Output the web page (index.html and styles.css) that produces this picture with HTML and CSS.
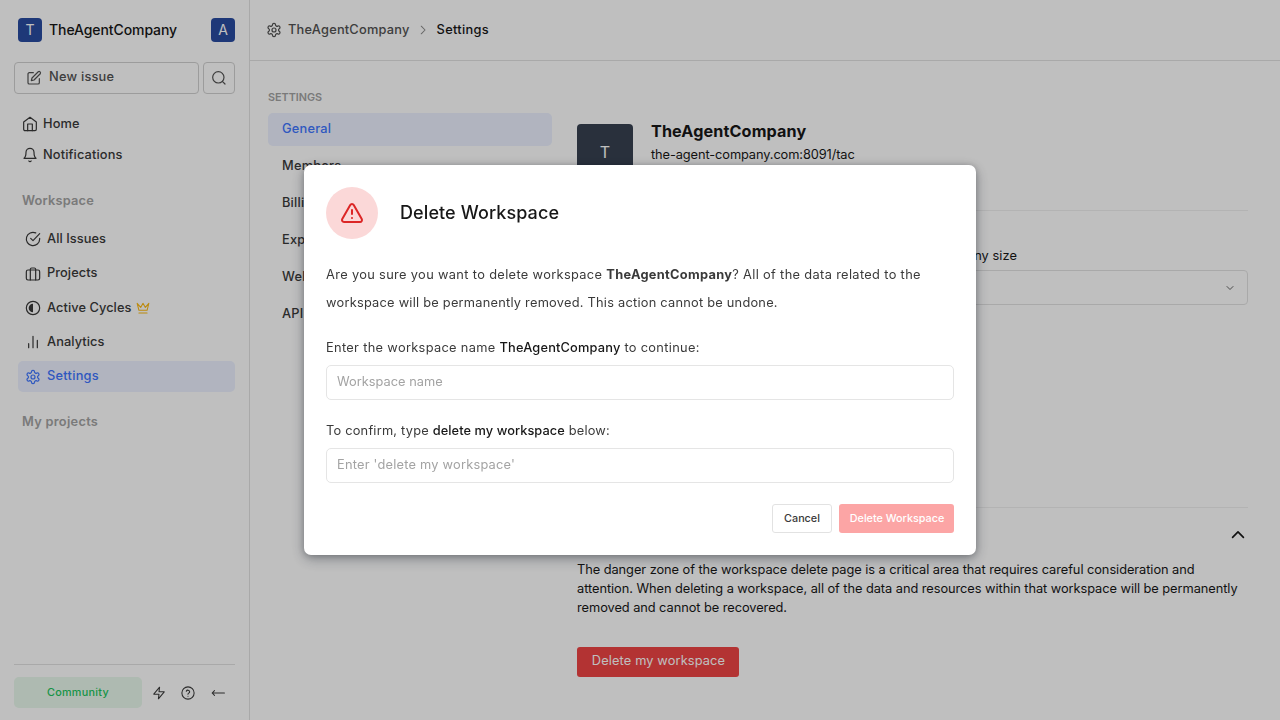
FILE: index.html
```html
<!DOCTYPE html>
<html lang="en">
<head>
<meta charset="utf-8">
<title>TheAgentCompany - General Settings</title>
<link rel="stylesheet" href="styles.css">
</head>
<body>
<div class="app">
  <aside class="sidebar">
    <div class="brand">
      <span class="avatar">T</span>
      <span class="brand-name">TheAgentCompany</span>
      <span class="avatar">A</span>
    </div>
    <div class="quick">
      <div class="new-issue">
        <svg class="icon i16" viewBox="0 0 24 24"><path d="M11 4H5a2 2 0 0 0-2 2v13a2 2 0 0 0 2 2h13a2 2 0 0 0 2-2v-6"/><path d="M18.4 2.6a2.17 2.17 0 0 1 3 3L12 15l-4 1 1-4Z"/></svg>
        <span>New issue</span>
      </div>
      <div class="search"><svg class="icon i16" viewBox="0 0 24 24"><circle cx="11" cy="11" r="8.5"/><path d="m21 21-4-4"/></svg></div>
    </div>
    <nav class="user-menu">
      <a class="user-item"><svg class="icon i16" viewBox="0 0 24 24"><path d="m2.500 9 9.500-7 9.500 7v11a2 2 0 0 1-2 2h-15a2 2 0 0 1-2-2z"/><path d="M8.500 22V12h7v10"/></svg><span>Home</span></a>
      <a class="user-item"><svg class="icon i16" viewBox="0 0 24 24"><path d="M6 8a6 6 0 0 1 12 0c0 7 3 9 3 9H3s3-2 3-9"/><path d="M10.300 21a1.940 1.940 0 0 0 3.400 0"/></svg><span>Notifications</span></a>
    </nav>
    <h2 class="group">Workspace</h2>
    <nav class="menu">
      <a class="item"><svg class="icon i16" viewBox="0 0 24 24"><path d="M22 11.080V12a10 10 0 1 1-5.930-9.140"/><path d="m8.500 11 3.500 3.500L22 4"/></svg><span>All Issues</span></a>
      <a class="item"><svg class="icon i16" viewBox="0 0 24 24"><rect x="2" y="6" width="20" height="15" rx="2.500"/><path d="M16 21V5a2 2 0 0 0-2-2h-4a2 2 0 0 0-2 2v16"/></svg><span>Projects</span></a>
      <a class="item"><svg class="icon i16" viewBox="0 0 24 24"><circle cx="12" cy="12" r="10"/><path class="solid" d="M12 5.500a6.500 6.500 0 0 0 0 13z"/></svg><span>Active Cycles</span><svg class="icon crown" viewBox="0 0 24 24"><path d="m2 4 3 12h14l3-12-6 7-4-7-4 7-6-7zM5 20.500h14"/></svg></a>
      <a class="item"><svg class="icon i16" viewBox="0 0 24 24"><path d="M18.500 20.500v-11M12 20.500v-17M5.500 20.500v-6"/></svg><span>Analytics</span></a>
      <a class="item active"><svg class="icon i16" viewBox="0 0 24 24"><use href="#gear"/></svg><span>Settings</span></a>
    </nav>
    <h2 class="group projects">My projects</h2>
    <div class="footer">
      <span class="plan">Community</span>
      <svg class="icon i14" viewBox="0 0 24 24"><path d="M13 2 3 14h9l-1 8 10-12h-9z"/></svg>
      <svg class="icon i14" viewBox="0 0 24 24"><circle cx="12" cy="12" r="10.500"/><path d="M9.100 9a3 3 0 0 1 5.800 1c0 2-3 2.500-3 4M12 17.500v.2"/></svg>
      <svg class="icon i14" viewBox="0 0 24 24"><path d="m6 8-4 4 4 4M2 12h21"/></svg>
    </div>
  </aside>

  <main class="main">
    <header class="topbar">
      <svg class="icon i16" viewBox="0 0 24 24">
        <g id="gear"><path d="M12.220 2h-.440a2 2 0 0 0-2 2v.180a2 2 0 0 1-1 1.730l-.430.250a2 2 0 0 1-2 0l-.150-.080a2 2 0 0 0-2.730.730l-.220.380a2 2 0 0 0 .730 2.730l.150.100a2 2 0 0 1 1 1.720v.510a2 2 0 0 1-1 1.740l-.150.090a2 2 0 0 0-.730 2.730l.220.380a2 2 0 0 0 2.730.730l.150-.080a2 2 0 0 1 2 0l.430.250a2 2 0 0 1 1 1.730V20a2 2 0 0 0 2 2h.440a2 2 0 0 0 2-2v-.180a2 2 0 0 1 1-1.730l.430-.250a2 2 0 0 1 2 0l.150.080a2 2 0 0 0 2.730-.730l.220-.390a2 2 0 0 0-.730-2.730l-.150-.080a2 2 0 0 1-1-1.740v-.500a2 2 0 0 1 1-1.740l.150-.090a2 2 0 0 0 .730-2.730l-.220-.380a2 2 0 0 0-2.730-.730l-.150.080a2 2 0 0 1-2 0l-.430-.250a2 2 0 0 1-1-1.730V4a2 2 0 0 0-2-2z"/><circle cx="12" cy="12" r="3"/></g>
      </svg>
      <span class="crumb">TheAgentCompany</span>
      <svg class="icon i14 sep" viewBox="0 0 24 24"><path d="m9 18.500 6.500-6.500-6.500-6.500"/></svg>
      <span class="crumb current">Settings</span>
    </header>
    <div class="body">
      <nav class="settings-nav">
        <h3 class="nav-title">SETTINGS</h3>
        <a class="nav-item selected">General</a>
        <a class="nav-item">Members</a>
        <a class="nav-item">Billing and plans</a>
        <a class="nav-item">Exports</a>
        <a class="nav-item">Webhooks</a>
        <a class="nav-item">API tokens</a>
      </nav>
      <section class="content">
        <div class="profile">
          <span class="logo">T</span>
          <div class="profile-text">
            <h1 class="profile-name">TheAgentCompany</h1>
            <p class="profile-url">the-agent-company.com:8091/tac</p>
          </div>
        </div>
        <div class="fields">
          <div class="field"><span class="field-label">Workspace name</span><div class="select"></div></div>
          <div class="field"><span class="field-label">Company size</span><div class="select"><svg class="icon i12" viewBox="0 0 24 24"><path d="m6 9 6 6 6-6"/></svg></div></div>
        </div>
        <div class="danger">
          <div class="danger-head"><span>Danger zone</span><svg class="icon i20" viewBox="0 0 24 24"><path d="m5.500 16 6.500-6.500 6.500 6.500"/></svg></div>
          <p class="danger-text">The danger zone of the workspace delete page is a critical area that requires careful consideration and<br>attention. When deleting a workspace, all of the data and resources within that workspace will be permanently<br>removed and cannot be recovered.</p>
          <button class="danger-btn">Delete my workspace</button>
        </div>
      </section>
    </div>
  </main>
</div>

<div class="backdrop">
  <div class="modal" role="dialog">
    <div class="modal-head">
      <span class="warn"><svg class="icon i24" viewBox="0 0 24 24"><path d="m21.730 18-8-14a2 2 0 0 0-3.480 0l-8 14A2 2 0 0 0 4 21h16a2 2 0 0 0 1.730-3Z"/><path d="M12 9v4M12 16.900v.2"/></svg></span>
      <h2 class="modal-title">Delete Workspace</h2>
    </div>
    <p class="modal-text"><span class="lead">Are you sure you want to delete workspace <b class="name">TheAgentCompany</b>? All of the data related to the</span><br>workspace will be permanently removed. This action cannot be undone.</p>
    <div class="ask">
      <label class="ask-label">Enter the workspace name <span class="strong">TheAgentCompany</span> to continue:</label>
      <input class="input" placeholder="Workspace name">
    </div>
    <div class="ask">
      <label class="ask-label confirm-label">To confirm, type <span class="strong phrase">delete my workspace</span> below:</label>
      <input class="input phrase-input" placeholder="Enter 'delete my workspace'">
    </div>
    <div class="actions">
      <button class="btn cancel">Cancel</button>
      <button class="btn confirm">Delete Workspace</button>
    </div>
  </div>
</div>
</body>
</html>
```
FILE: styles.css
```css
* { box-sizing: border-box; }
body { margin: 0; height: 720px; overflow: hidden; background: #fff; color: #171717; font: 400 12.8px/18px Inter, sans-serif; letter-spacing: 0.18px; }
h1, h2, h3, p { margin: 0; font-weight: inherit; font-size: inherit; }
button, input { font-family: inherit; margin: 0; }

.icon { display: block; flex: none; fill: none; stroke: currentColor; stroke-width: 1.8; stroke-linecap: round; stroke-linejoin: round; }
.icon .solid { fill: currentColor; stroke: none; }
.i12 { width: 12px; height: 12px; }
.i14 { width: 14px; height: 14px; }
.i16 { width: 16px; height: 16px; }
.i20 { width: 20px; height: 20px; stroke-width: 2; }
.i24 { width: 24px; height: 24px; stroke-width: 2; }

.app { display: flex; height: 720px; }

.sidebar { width: 250px; flex: none; padding: 18px 14px 0; border-right: 1px solid #e2e2e2; display: flex; flex-direction: column; color: #3a3a3a; font-weight: 450; }
.brand { display: flex; align-items: center; height: 24px; padding-left: 4px; }
.avatar { width: 24px; height: 24px; border-radius: 4px; background: #294ba1; color: #fff; font-size: 14px; font-weight: 400; line-height: 24px; text-align: center; letter-spacing: 0; }
.brand-name { flex: 1; margin-left: 7px; font-size: 14px; letter-spacing: -0.09px; color: #171717; }
.quick { display: flex; gap: 4px; margin-top: 20px; }
.new-issue { width: 185px; height: 32px; display: flex; align-items: center; gap: 7px; padding: 0 11px; border: 1px solid #d0d0d0; border-radius: 4px; color: #525252; }
.new-issue span { padding-bottom: 2px; letter-spacing: 0.23px; }
.search { width: 32px; height: 32px; display: grid; place-items: center; border: 1px solid #d0d0d0; border-radius: 4px; color: #525252; }
.user-menu { margin-top: 14px; }
.user-item { display: flex; align-items: center; gap: 5px; height: 31px; padding-left: 8px; letter-spacing: 0.14px; }
.group { margin-top: 22px; padding-left: 8px; font-weight: 600; color: #a3a3a3; line-height: 18px; }
.menu { display: flex; flex-direction: column; gap: 3.4px; margin: 14px 0 0 4px; }
.item { display: flex; align-items: center; height: 30.9px; padding-left: 7px; border-radius: 5px; letter-spacing: 0.07px; }
.item span { margin-left: 6px; padding-bottom: 1px; }
.item .crown { width: 14px; height: 14px; margin-left: 5px; color: #fbb914; }
.item.active { background: #ecf1ff; color: #3f76ff; letter-spacing: 0.26px; }
.group.projects { margin-top: 21px; letter-spacing: 0.28px; }
.footer { margin-top: auto; height: 56px; border-top: 1px solid #e2e2e2; display: flex; align-items: center; }
.plan { width: 128px; height: 31px; border-radius: 5px; background: #e8f9ec; color: #22c55e; font-size: 10.8px; line-height: 31px; text-align: center; letter-spacing: 0.3px; }
.footer .icon { margin-left: 15.5px; }
.footer .plan + .icon { margin-left: 10px; }
.footer .plan + .icon + .icon { margin-left: 15px; }

.main { flex: 1; min-width: 0; display: flex; flex-direction: column; }
.topbar { height: 61px; border-bottom: 1px solid #e2e2e2; display: flex; align-items: center; padding-left: 16px; font-weight: 450; color: #525252; letter-spacing: 0.22px; }
.crumb { margin-left: 6px; }
.sep { margin-left: 6px; color: #8b8b8b; }
.crumb.current { margin-left: 7px; color: #171717; letter-spacing: 0.3px; }
.body { display: flex; gap: 25px; padding: 27px 32px 0 18px; }

.settings-nav { width: 284px; flex: none; display: flex; flex-direction: column; gap: 4px; font-weight: 450; }
.nav-title { height: 21px; padding-top: 1px; font-size: 10.8px; font-weight: 600; letter-spacing: 0; color: #a3a3a3; }
.nav-item { height: 33px; padding: 0 14px; border-radius: 5px; line-height: 32px; color: #3a3a3a; letter-spacing: 0.22px; }
.nav-item.selected { background: #ecf1ff; color: #3f76ff; }

.content { flex: 1; min-width: 0; padding-top: 33px; }
.profile { display: flex; gap: 18px; align-items: flex-start; padding: 3px 0 30px; height: 90px; border-bottom: 1px solid #efefef; }
.logo { width: 56px; height: 56px; border-radius: 4px; background: #374151; color: #fff; font-size: 16px; line-height: 56px; text-align: center; }
.profile-name { font-size: 16.2px; font-weight: 650; line-height: 22px; letter-spacing: 0.12px; margin-top: -4px; }
.profile-url { letter-spacing: -0.09px; line-height: 18px; margin-top: 4px; }
.fields { display: grid; grid-template-columns: 1fr 1fr; gap: 36px; margin-top: 36px; }
.field-label { display: block; line-height: 18px; letter-spacing: 0.06px; }
.select { margin-top: 5px; height: 35px; border: 1px solid #e2e2e2; border-radius: 4px; display: flex; align-items: center; justify-content: flex-end; padding-right: 11px; color: #525252; }
.danger { margin-top: 202px; border-top: 1px solid #efefef; }
.danger-head { display: flex; align-items: center; justify-content: space-between; height: 52px; font-size: 16.2px; }
.danger-text { line-height: 19px; letter-spacing: -0.05px; white-space: nowrap; }
.danger-btn { display: block; width: 162px; height: 30px; margin-top: 30px; padding: 0 0 3px 1px; border: 0; border-radius: 3px; background: #ef4444; color: #fff; font-size: 12.8px; letter-spacing: 0.13px; }

.backdrop { position: fixed; inset: 0; display: grid; place-items: center; background: rgba(0, 0, 0, 0.25); }
.modal { width: 672px; height: 390px; padding: 22px; border-radius: 7px; background: #fff; box-shadow: 0 1px 6px rgba(0, 0, 0, 0.22), 0 4px 14px rgba(16, 24, 40, 0.32); }
.modal-head { display: flex; align-items: center; gap: 22px; }
.warn { width: 52px; height: 52px; border-radius: 50%; background: #fbd8d8; color: #dc2626; display: grid; place-items: center; }
.modal-title { font-size: 18px; font-weight: 450; line-height: 26px; letter-spacing: 0.1px; }
.modal-text { margin-top: 22px; line-height: 28px; letter-spacing: 0.24px; color: #3a3a3a; white-space: nowrap; }
.lead { letter-spacing: 0.35px; }
.name { font-weight: 700; letter-spacing: 0.3px; }
.ask { margin-top: 22px; color: #3a3a3a; }
.ask-label { display: block; line-height: 18px; letter-spacing: 0.33px; }
.confirm-label { letter-spacing: 0.22px; }
.strong { font-weight: 500; color: #171717; letter-spacing: 0.18px; }
.strong.phrase { letter-spacing: 0.07px; }
.input { display: block; width: 100%; height: 35px; margin-top: 8px; padding: 0 10px 2px; border: 1px solid #e5e5e5; border-radius: 5px; background: #fff; font-size: 12.8px; letter-spacing: 0.02px; }
.phrase-input { letter-spacing: 0.23px; }
.input::placeholder { color: #a3a3a3; opacity: 1; }
.actions { display: flex; justify-content: flex-end; gap: 7px; margin-top: 21px; }
.btn { height: 29px; padding: 0; border-radius: 3px; font-size: 10.8px; font-weight: 450; letter-spacing: 0; }
.btn.cancel { width: 60px; border: 1px solid #e2e2e2; background: #fff; color: #3a3a3a; }
.btn.confirm { width: 115px; border: 0; padding-left: 1px; background: #fca5a5; color: #fff; }
```
